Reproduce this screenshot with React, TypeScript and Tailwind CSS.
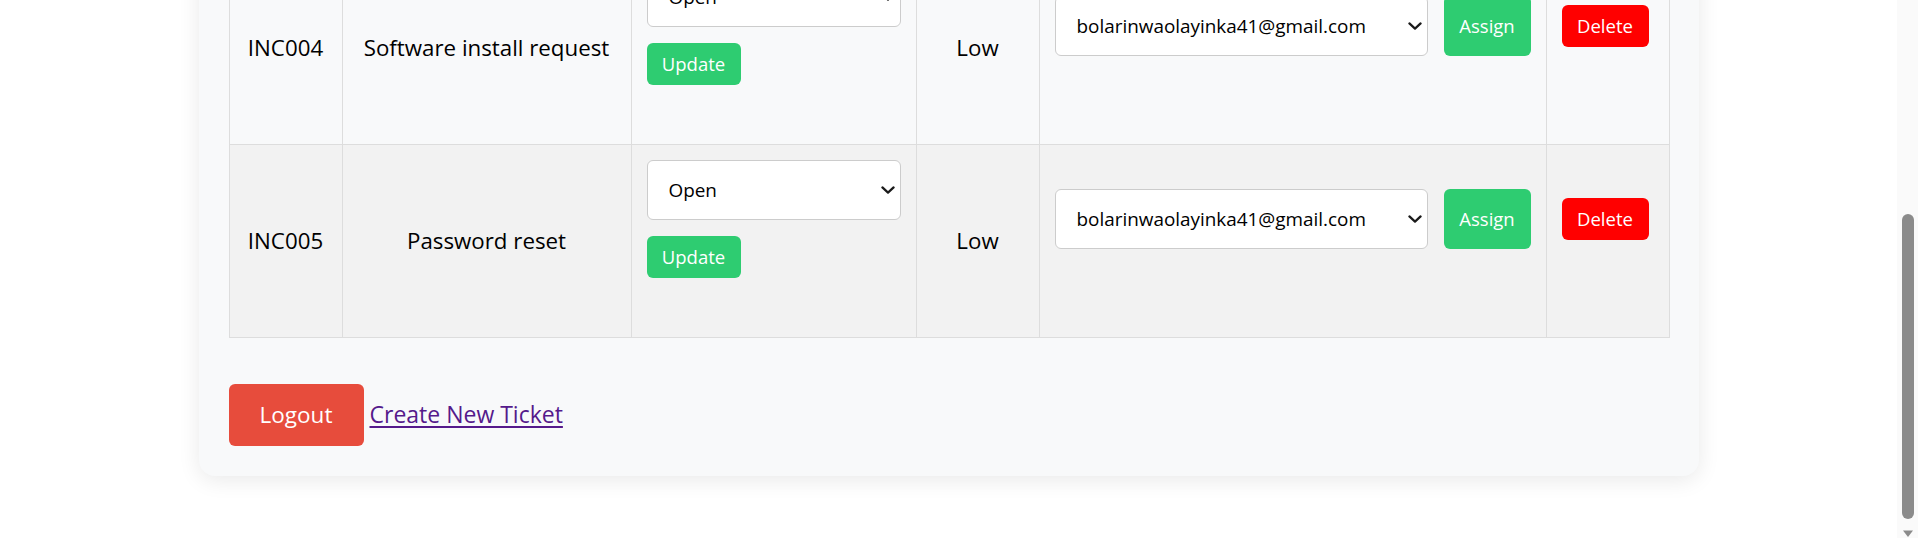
import React from 'react';

const tickets = [
  { id: 'INC004', title: 'Software install request', priority: 'Low', rowBg: '' },
  { id: 'INC005', title: 'Password reset', priority: 'Low', rowBg: 'bg-[#f2f2f2]' },
];

function Chevron() {
  return (
    <svg
      width="14"
      height="8"
      viewBox="0 0 14 8"
      className="pointer-events-none absolute right-[6px] top-1/2 -translate-y-1/2"
    >
      <path d="M1.4 1.4 L7 6.6 L12.6 1.4" fill="none" stroke="#1a1a1a" strokeWidth="2.2" strokeLinecap="round" strokeLinejoin="round" />
    </svg>
  );
}

function SelectBox({ options, className }: { options: string[]; className?: string }) {
  return (
    <div className={`relative ${className ?? ''}`}>
      <select
        defaultValue={options[0]}
        className="h-[60px] w-full appearance-none rounded-[6px] border border-[#cccccc] bg-white pl-[21px] pr-[30px] text-[18.9px] text-black outline-none"
      >
        {options.map((o) => (
          <option key={o}>{o}</option>
        ))}
      </select>
      <Chevron />
    </div>
  );
}

function ScrollBar() {
  return (
    <div className="flex h-[538px] w-[21px] shrink-0 flex-col items-center bg-[#fafafa] pt-[214px]">
      <div className="h-[307px] w-[12px] rounded-full bg-[#8b8b8b]" />
      <svg width="12" height="8" viewBox="0 0 12 8" className="mt-[11px] shrink-0">
        <path d="M1 0.5 H11 L6 7 Z" fill="#8b8b8b" strokeLinejoin="round" />
      </svg>
    </div>
  );
}

function App() {
  const cell = 'border border-[#dddddd] px-[15px] py-[15px] align-middle';
  return (
    <div className="flex h-[538px] overflow-hidden bg-white font-['Open_Sans',sans-serif] text-black">
      <main className="min-w-0 flex-1">
        <section className="mx-auto -mt-[79px] w-[1500px] rounded-[16px] bg-[#f8f9fa] p-[30px] shadow-[0_4px_22px_rgba(0,0,0,0.09)]">
          <table className="w-full table-fixed border-collapse">
            <colgroup>
              <col className="w-[113px]" />
              <col className="w-[289px]" />
              <col className="w-[285px]" />
              <col className="w-[123px]" />
              <col className="w-[507px]" />
              <col className="w-[123px]" />
            </colgroup>
            <tbody>
              {tickets.map((t) => (
                <tr key={t.id} className={t.rowBg}>
                  <td className={`${cell} text-center text-[22.3px]`}>{t.id}</td>
                  <td className={`${cell} text-center text-[22.3px]`}>{t.title}</td>
                  <td className={cell}>
                    <div className="mb-[44px]">
                      <SelectBox options={['Open', 'In Progress', 'Resolved', 'Closed']} />
                      <button className="mt-[16px] h-[42px] w-[94px] rounded-[6px] bg-[#2ecc71] text-[18.5px] text-white">
                        Update
                      </button>
                    </div>
                  </td>
                  <td className={`${cell} text-center text-[22.3px]`}>{t.priority}</td>
                  <td className={cell}>
                    <div className="mb-[44px] flex gap-[16px]">
                      <SelectBox options={['bolarinwaolayinka41@gmail.com']} className="flex-1" />
                      <button className="w-[87px] shrink-0 rounded-[6px] bg-[#2ecc71] text-[18.5px] text-white">
                        Assign
                      </button>
                    </div>
                  </td>
                  <td className={cell}>
                    <div className="mb-[44px]">
                      <button className="h-[42px] w-[87px] rounded-[6px] bg-[#ff0000] text-[18.5px] text-white">
                        Delete
                      </button>
                    </div>
                  </td>
                </tr>
              ))}
            </tbody>
          </table>

          <div className="mt-[46px] flex items-baseline gap-[6px]">
            <button className="h-[62px] w-[135px] rounded-[6px] bg-[#e74c3c] text-[22.5px] text-white">
              Logout
            </button>
            <a href="#" className="text-[23px] text-[#551a8b] underline underline-offset-[3px]">
              Create New Ticket
            </a>
          </div>
        </section>
      </main>
      <ScrollBar />
    </div>
  );
}

export default App;
